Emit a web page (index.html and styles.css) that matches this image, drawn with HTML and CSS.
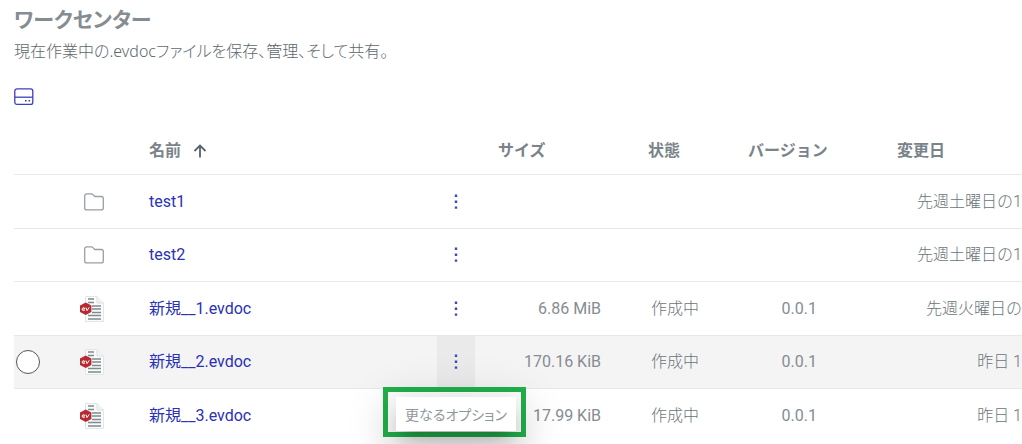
FILE: index.html
```html
<!DOCTYPE html>
<html lang="ja">
<head>
<meta charset="utf-8">
<title>ワークセンター</title>
<link rel="stylesheet" href="styles.css">
</head>
<body>
<svg class="defs" aria-hidden="true">
  <symbol id="folder" viewBox="0 0 20 18"><path d="M.7 3.2V15c0 1.2.7 1.9 1.900 1.900h14.800c1.200 0 1.900-.7 1.900-1.900V5.400c0-1.200-.7-1.900-1.900-1.900h-6.600L8.900 1.600C8.500 1.100 8 .9 7.400.9H2.800C1.500.9.7 1.700.7 3.200z" fill="none" stroke="#989fa6" stroke-width="1.300"/></symbol>
  <symbol id="evdoc" viewBox="0 0 24 26">
    <path d="M5.500.5h11.500l6.500 6.500v18.500h-18z" fill="#fbfbfb" stroke="#e3e6e6"/>
    <path d="M17 .5V7h6.500" fill="#f1f3f3" stroke="#dde1e1"/>
    <path d="M8 3h6M8 6.500h6M12 10h9M12 13h9M12 16.500h9M8 19.500h13M8 23h13" stroke="#7f8c8f" stroke-width="1.500"/>
    <path d="M5.700 6.500l5.700 3v6.600l-5.700 3-5.700-3V9.500z" fill="#b92a30"/>
    <path d="M2.200 13h2.600c0-2-2.600-1.800-2.600.2 0 1.500 1.700 1.600 2.600.9M6 11.600l1 3 2.300-3.300" fill="none" stroke="#fff" stroke-width="1"/>
  </symbol>
  <symbol id="dots" viewBox="0 0 4 16"><path d="M.8.500h2.400v2.400H.8zM.8 6.500h2.400v2.400H.8zM.8 12.400h2.400v2.400H.8z" fill="#4347bb"/></symbol>
</svg>
<main class="page">
  <h1 class="title">ワークセンター</h1>
  <p class="subtitle">現在作業中の.evdocファイルを保存、管理、そして共有。</p>
  <button class="drive" type="button" aria-label="ドライブ">
    <svg width="20" height="18" viewBox="0 0 20 18" fill="none" stroke="#3c40bd" stroke-width="1.300"><rect x=".8" y=".8" width="18" height="15.600" rx="2.200"/><path d="M.8 9.200h18"/><path d="M11 12.700h1.600M14.500 12.700h1.600" stroke-width="1.500"/></svg>
  </button>
  <table class="files">
    <colgroup><col class="c-select"><col class="c-icon"><col><col class="c-menu"><col class="c-size"><col class="c-state"><col class="c-version"><col class="c-date"></colgroup>
    <thead>
      <tr>
        <th></th><th></th>
        <th class="name"><button class="sort" type="button">名前<svg width="14" height="14" viewBox="0 0 14 14" fill="none" stroke="#59636b" stroke-width="1.800"><path d="M7 13.500V1.500M1.500 7L7 1.500 12.500 7"/></svg></button></th>
        <th></th><th class="size">サイズ</th><th class="state">状態</th><th class="version">バージョン</th><th class="date">変更日</th>
      </tr>
    </thead>
    <tbody>
      <tr>
        <td></td><td class="icon"><svg width="20" height="18"><use href="#folder"/></svg></td>
        <td class="name"><a href="#">test1</a></td>
        <td class="menu"><button class="more" type="button" aria-label="更なるオプション"><svg width="4" height="16"><use href="#dots"/></svg></button></td>
        <td class="size"></td><td class="state"></td><td class="version"></td><td class="date">先週土曜日の1</td>
      </tr>
      <tr>
        <td></td><td class="icon"><svg width="20" height="18"><use href="#folder"/></svg></td>
        <td class="name"><a href="#">test2</a></td>
        <td class="menu"><button class="more" type="button" aria-label="更なるオプション"><svg width="4" height="16"><use href="#dots"/></svg></button></td>
        <td class="size"></td><td class="state"></td><td class="version"></td><td class="date">先週土曜日の1</td>
      </tr>
      <tr>
        <td></td><td class="icon"><svg width="24" height="26"><use href="#evdoc"/></svg></td>
        <td class="name"><a href="#">新規__1.evdoc</a></td>
        <td class="menu"><button class="more" type="button" aria-label="更なるオプション"><svg width="4" height="16"><use href="#dots"/></svg></button></td>
        <td class="size">6.86 MiB</td><td class="state">作成中</td><td class="version">0.0.1</td><td class="date">先週火曜日の</td>
      </tr>
      <tr class="active">
        <td class="select"><input class="check" type="checkbox" aria-label="新規__2.evdoc"></td>
        <td class="icon"><svg width="24" height="26"><use href="#evdoc"/></svg></td>
        <td class="name"><a href="#">新規__2.evdoc</a></td>
        <td class="menu"><button class="more" type="button" aria-describedby="tip"><svg width="4" height="16"><use href="#dots"/></svg></button>
          <div class="frame"><div class="tip" id="tip" role="tooltip">更なるオプション</div></div></td>
        <td class="size">170.16 KiB</td><td class="state">作成中</td><td class="version">0.0.1</td><td class="date">昨日 1</td>
      </tr>
      <tr>
        <td></td><td class="icon"><svg width="24" height="26"><use href="#evdoc"/></svg></td>
        <td class="name"><a href="#">新規__3.evdoc</a></td>
        <td class="menu"></td>
        <td class="size">17.99 KiB</td><td class="state">作成中</td><td class="version">0.0.1</td><td class="date">昨日 1</td>
      </tr>
    </tbody>
  </table>
</main>
</body>
</html>
```
FILE: styles.css
```css
* { box-sizing: border-box; }
body { margin: 0; background: #fff; color: #868c92; font: 16px/24px Roboto, "Noto Sans CJK JP", sans-serif; }
button { border: 0; padding: 0; background: none; font: inherit; color: inherit; cursor: pointer; }
svg { display: block; }
.defs { position: absolute; width: 0; height: 0; }
.page { padding: 4px 0 8px 14px; }
.title { margin: 0; font-size: 21px; line-height: 32px; font-weight: 700; font-feature-settings: "palt"; color: #858c92; }
.subtitle { margin: 3px 0 0; line-height: 24px; font-family: "Noto Sans", "Noto Sans CJK JP", sans-serif; font-weight: 300; font-feature-settings: "palt"; color: #60686e; }
.drive { display: block; margin-top: 25px; }
.files { width: 100%; margin-top: 22px; table-layout: fixed; border-collapse: separate; border-spacing: 0; }
.c-select { width: 66px; }
.c-icon { width: 57px; }
.c-menu { width: 38px; }
.c-size { width: 138px; }
.c-state { width: 98px; }
.c-version { width: 118px; }
.c-date { width: 193px; }
th, td { padding: 0 12px; white-space: nowrap; }
th { height: 46px; text-align: left; color: #7a838a; font-weight: 700; }
td { height: 53px; border-top: 1px solid #e8e8e8; text-align: right; font-weight: 300; }
tbody tr:nth-child(odd) td { height: 54px; }
.size { padding-left: 23px; }
.state { padding-left: 35px; }
.version { padding-left: 37px; }
.date { padding-left: 68px; padding-right: 0; }
td.state, td.date { color: #6c747a; }
td.date { padding-left: 0; }
td.size, td.version { font-weight: 400; }
td.name { text-align: left; font-weight: 400; }
.name a { color: #2a31b4; text-decoration: none; }
.icon { padding: 0; }
.icon svg { margin: 0 33px 0 auto; }
.sort { display: flex; align-items: center; gap: 12px; }
.menu { position: relative; padding: 0; }
.more { display: flex; width: 100%; height: 100%; align-items: center; justify-content: center; }
.active td { background: #f4f4f4; }
.active .more { background: #eaeaea; }
.select { padding: 0 2px; text-align: left; }
.check { display: block; appearance: none; width: 24px; height: 24px; margin: 0; border: 1px solid #4f585f; border-radius: 50%; background: #fff; }
.frame { position: absolute; z-index: 2; top: 51px; left: 50%; transform: translateX(-73px); border: 5px solid #22b14c; padding: 5px 5px 1px 8px; }
.tip { width: 120px; padding: 5px 0; text-align: center; background: #fff; color: #90979c; font-size: 14px; font-family: "Noto Sans CJK JP", sans-serif; font-weight: 400; font-feature-settings: "palt"; }
.tip { box-shadow: 0 11px 15px -7px rgba(0,0,0,.2), 0 24px 38px 3px rgba(0,0,0,.14), 0 9px 46px 8px rgba(0,0,0,.12); }
```
